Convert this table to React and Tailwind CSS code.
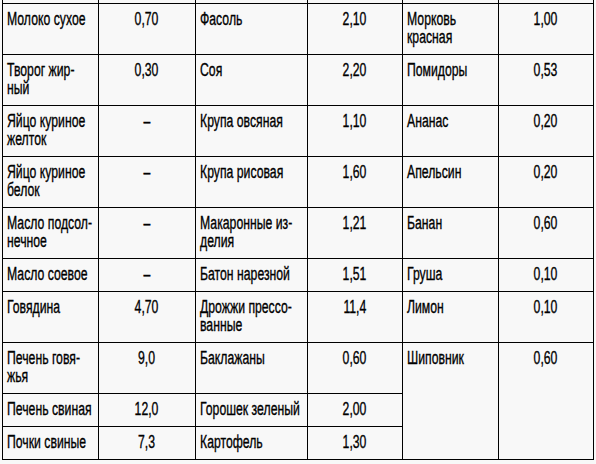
import React from "react";

const rows = [
  ["Молоко сухое", "0,70", "Фасоль", "2,10", "Морковь\nкрасная", "1,00"],
  ["Творог жир-\nный", "0,30", "Соя", "2,20", "Помидоры", "0,53"],
  ["Яйцо куриное\nжелток", "–", "Крупа овсяная", "1,10", "Ананас", "0,20"],
  ["Яйцо куриное\nбелок", "–", "Крупа рисовая", "1,60", "Апельсин", "0,20"],
  ["Масло подсол-\nнечное", "–", "Макаронные из-\nделия", "1,21", "Банан", "0,60"],
  ["Масло соевое", "–", "Батон нарезной", "1,51", "Груша", "0,10"],
  ["Говядина", "4,70", "Дрожжи прессо-\nванные", "11,4", "Лимон", "0,10"],
  ["Печень говя-\nжья", "9,0", "Баклажаны", "0,60", "Шиповник", "0,60"],
  ["Печень свиная", "12,0", "Горошек зеленый", "2,00"],
  ["Почки свиные", "7,3", "Картофель", "1,30"],
];

function Name({ t, rowSpan }) {
  return (
    <td
      rowSpan={rowSpan}
      className="border-[1.5px] border-black align-top pl-[4px] pr-0 pt-[6px] pb-[8px] whitespace-pre overflow-visible"
    >
      <span className="inline-block origin-left scale-x-[0.68] [-webkit-text-stroke:0.35px_#000]">{t}</span>
    </td>
  );
}

function Num({ t, rowSpan }) {
  return (
    <td
      rowSpan={rowSpan}
      className="border-[1.5px] border-black align-top text-center pt-[6px] pb-[8px] whitespace-pre"
    >
      <span className="inline-block origin-center scale-x-[0.68] [-webkit-text-stroke:0.35px_#000]">{t}</span>
    </td>
  );
}

export default function App() {
  return (
    <div className="w-[596px] h-[464px] overflow-hidden bg-[#f8f8f8]">
      <table
        className="ml-[2px] w-[591px] table-fixed border-collapse text-[18px] leading-[18px] text-black"
        style={{ fontFamily: '"Liberation Sans", Arial, sans-serif' }}
      >
        <colgroup>
          <col className="w-[96px]" />
          <col className="w-[97px]" />
          <col className="w-[112px]" />
          <col className="w-[95px]" />
          <col className="w-[96px]" />
          <col className="w-[95px]" />
        </colgroup>
        <tbody>
          <tr className="h-[3px]">
            {[0, 1, 2, 3, 4, 5].map((i) => (
              <td key={i} className="border-x-[1.5px] border-black p-0 h-[3px]"></td>
            ))}
          </tr>
          {rows.map((r, i) => (
            <tr key={i}>
              <Name t={r[0]} />
              <Num t={r[1]} />
              <Name t={r[2]} />
              <Num t={r[3]} />
              {r.length > 4 && <Name t={r[4]} rowSpan={i === 7 ? 3 : undefined} />}
              {r.length > 4 && <Num t={r[5]} rowSpan={i === 7 ? 3 : undefined} />}
            </tr>
          ))}
        </tbody>
      </table>
    </div>
  );
}
